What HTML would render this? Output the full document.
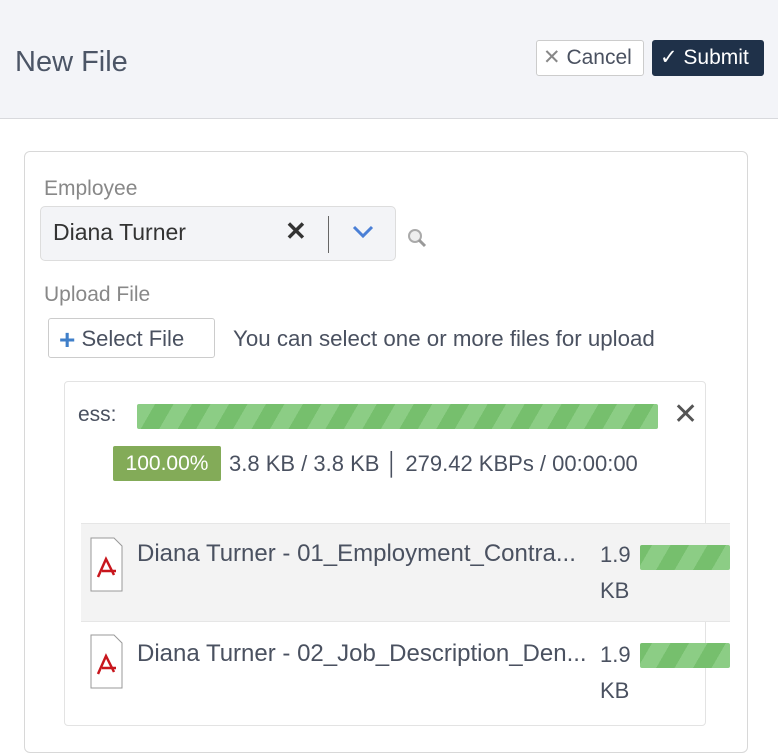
<!DOCTYPE html>
<html><head><style>
body{margin:0;width:778px;height:722px;overflow:hidden;background:#fff;font-family:"Liberation Sans",sans-serif;color:#4a5160;position:relative}
.hdr{position:absolute;left:0;top:0;width:778px;height:118px;background:#f3f4f8;border-bottom:1px solid #d8d9dd}
.abs{position:absolute;white-space:nowrap}
.stripe{background:repeating-linear-gradient(-60deg,#8ccd85 0 16px,#76bf6d 16px 32px);border-radius:2px}
</style></head><body>
<div class="hdr"></div>
<div class="abs" style="left:15px;top:46px;font-size:29px;color:#4c5566">New File</div>
<div class="abs" style="left:536px;top:40px;border:1px solid #ccc;border-radius:3px;background:#fff;font-size:21px;line-height:34px;color:#4a5160;box-sizing:border-box;width:108px;height:36px;padding-left:6px"><span style="color:#888">✕</span> Cancel</div>
<div class="abs" style="left:652px;top:40px;width:112px;height:36px;background:#1f3149;border-radius:3px;color:#fff;font-size:21px;line-height:36px;padding-left:8px;box-sizing:border-box">✓ Submit</div>
<div class="abs" style="left:24px;top:151px;width:722px;height:600px;border:1px solid #d8d8d8;border-radius:6px"></div>
<div class="abs" style="left:44px;top:177px;font-size:21px;color:#888">Employee</div>
<div class="abs" style="left:40px;top:206px;width:356px;height:55px;background:#f3f4f7;border:1px solid #ddd;border-radius:5px;box-sizing:border-box"></div>
<div class="abs" style="left:53px;top:219px;font-size:23px;color:#333">Diana Turner</div>
<div class="abs" style="left:285px;top:216px;font-size:26px;font-weight:bold;color:#333">✕</div>
<div class="abs" style="left:328px;top:216px;width:1px;height:37px;background:#666"></div>
<svg class="abs" style="left:352px;top:225px" width="22" height="14"><path d="M2 2 L11 11 L20 2" stroke="#4a7fd6" stroke-width="3" fill="none"/></svg>
<svg class="abs" style="left:405px;top:227px" width="24" height="22"><circle cx="10" cy="9" r="6" stroke="#aaa" stroke-width="2" fill="#eee"/><path d="M14 13 L20 19" stroke="#999" stroke-width="3"/></svg>
<div class="abs" style="left:44px;top:283px;font-size:21px;color:#888">Upload File</div>
<div class="abs" style="left:48px;top:318px;width:167px;height:40px;border:1px solid #ccc;border-radius:3px;box-sizing:border-box;font-size:22px;line-height:40px;padding-left:10px;color:#4a5160"><b style="color:#3f7fc9;font-size:28px;vertical-align:-3px">+</b> Select File</div>
<div class="abs" style="left:233px;top:326px;font-size:22.3px;color:#4a5160">You can select one or more files for upload</div>
<div class="abs" style="left:64px;top:381px;width:642px;height:345px;border:1px solid #e3e3e3;border-radius:4px;box-sizing:border-box"></div>
<div class="abs" style="left:78px;top:403px;font-size:21px">ess:</div>
<div class="abs stripe" style="left:137px;top:404px;width:521px;height:25px"></div>
<div class="abs" style="left:673px;top:397px;font-size:30px;color:#555">✕</div>
<div class="abs" style="left:113px;top:446px;width:108px;height:35px;background:#83ab58;border-radius:2px;color:#fff;font-size:21px;line-height:35px;text-align:center">100.00%</div>
<div class="abs" style="left:229px;top:451px;font-size:22px;color:#4a5160">3.8 KB / 3.8 KB │ 279.42 KBPs / 00:00:00</div>
<div class="abs" style="left:81px;top:523px;width:649px;height:97px;background:#f3f3f3;border-top:1px solid #e6e6e6;border-bottom:1px solid #e6e6e6"></div>
<svg class="abs" style="left:90px;top:537px" width="34" height="56"><path d="M1 1 H24 L32 9 V54 H1 Z" fill="#fff" stroke="#999"/><path d="M8 40 L16 22 L24 38 M12 34 H26" stroke="#c8161d" stroke-width="2.5" fill="none"/></svg>
<div class="abs" style="left:137px;top:540px;font-size:24px">Diana Turner - 01_Employment_Contra...</div>
<div class="abs" style="left:600px;top:537px;font-size:22px;line-height:36px">1.9<br>KB</div>
<div class="abs stripe" style="left:640px;top:545px;width:90px;height:25px"></div>
<svg class="abs" style="left:90px;top:634px" width="34" height="56"><path d="M1 1 H24 L32 9 V54 H1 Z" fill="#fff" stroke="#999"/><path d="M8 40 L16 22 L24 38 M12 34 H26" stroke="#c8161d" stroke-width="2.5" fill="none"/></svg>
<div class="abs" style="left:137px;top:640px;font-size:24px">Diana Turner - 02_Job_Description_Den...</div>
<div class="abs" style="left:600px;top:637px;font-size:22px;line-height:36px">1.9<br>KB</div>
<div class="abs stripe" style="left:640px;top:643px;width:90px;height:25px"></div>
</body></html>
